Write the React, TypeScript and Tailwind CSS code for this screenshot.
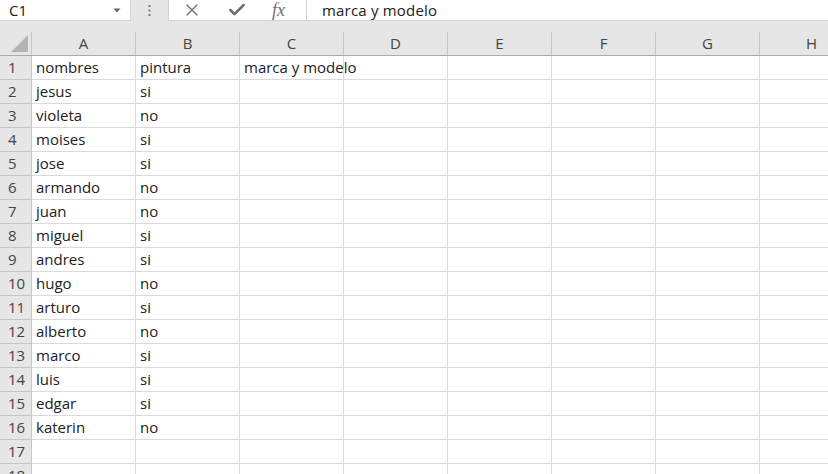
import { X, Check } from 'lucide-react';

const cols = ['A', 'B', 'C', 'D', 'E', 'F', 'G', 'H'];

const data: [string, string, string][] = [
  ['nombres', 'pintura', 'marca y modelo'],
  ['jesus', 'si', ''],
  ['violeta', 'no', ''],
  ['moises', 'si', ''],
  ['jose', 'si', ''],
  ['armando', 'no', ''],
  ['juan', 'no', ''],
  ['miguel', 'si', ''],
  ['andres', 'si', ''],
  ['hugo', 'no', ''],
  ['arturo', 'si', ''],
  ['alberto', 'no', ''],
  ['marco', 'si', ''],
  ['luis', 'si', ''],
  ['edgar', 'si', ''],
  ['katerin', 'no', ''],
  ['', '', ''],
  ['', '', ''],
];

export default function App() {
  return (
    <div className="w-[828px] h-[474px] overflow-hidden bg-[#e6e6e6] font-['Open_Sans',sans-serif] text-[#212121]">
      {/* Formula bar */}
      <div className="flex h-[21px] bg-[#e6e6e6]">
        <div className="w-[131px] h-[21px] bg-white border-r border-b border-[#d4d4d4] flex items-center justify-between pl-[9px] pr-[9px]">
          <span className="text-[15px] leading-[20px]">C1</span>
          <svg width="8" height="5" viewBox="0 0 8 5"><path d="M0.5 0.5 L7.5 0.5 L4 4.5 Z" fill="#666" /></svg>
        </div>
        <div className="w-[37px] flex items-center justify-center">
          <svg width="3" height="13" viewBox="0 0 3 13">
            <rect x="0.5" y="1" width="2" height="2" fill="#7a7a7a" />
            <rect x="0.5" y="5.5" width="2" height="2" fill="#7a7a7a" />
            <rect x="0.5" y="10" width="2" height="2" fill="#7a7a7a" />
          </svg>
        </div>
        <div className="w-[139px] h-[21px] bg-white border-x border-b border-[#d4d4d4] flex items-center pl-[13px] gap-[25px] text-[#6d6d6d]">
          <X className="w-[20px] h-[20px]" strokeWidth={1.6} />
          <Check className="w-[20px] h-[20px]" strokeWidth={3} />
          <span className="font-['Liberation_Serif',serif] italic text-[18px] leading-[20px] text-[#707070]">fx</span>
        </div>
        <div className="flex-1 h-[21px] bg-white border-b border-[#d4d4d4] flex items-center pl-[15px]">
          <span className="text-[15px] leading-[20px] tracking-[0.2px]">marca y modelo</span>
        </div>
      </div>

      <div className="h-[11px]" />

      {/* Column headers */}
      <div className="flex h-[24px] border-b border-[#ababab] bg-[#e6e6e6] text-[15px] text-[#444]">
        <div className="w-[32px] shrink-0 border-r border-[#c6c6c6] flex items-end justify-end pr-[3px] pb-[3px]">
          <svg width="17" height="17" viewBox="0 0 17 17"><path d="M17 0 L17 17 L0 17 Z" fill="#b4b4b4" /></svg>
        </div>
        {cols.map((c) => (
          <div key={c} className="w-[104px] shrink-0 border-r border-[#c6c6c6] flex items-center justify-center">
            {c}
          </div>
        ))}
      </div>

      {/* Rows */}
      {data.map((r, i) => (
        <div key={i} className="flex h-[24px] text-[15px]">
          <div className="w-[32px] shrink-0 bg-[#e6e6e6] border-r border-b border-[#c6c6c6] flex items-center pl-[8px] text-[#444]">
            {i + 1}
          </div>
          {cols.map((c, j) => (
            <div
              key={c}
              className="w-[104px] shrink-0 bg-white border-r border-b border-[#dadada] flex items-center pl-[4px] whitespace-nowrap"
            >
              {j < 3 && r[j] ? <span className="relative z-10">{r[j]}</span> : null}
            </div>
          ))}
        </div>
      ))}
    </div>
  );
}
